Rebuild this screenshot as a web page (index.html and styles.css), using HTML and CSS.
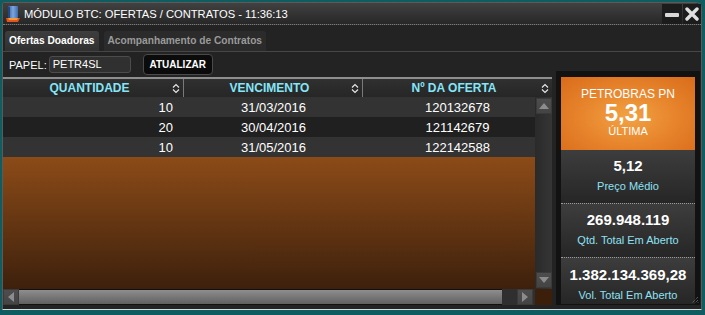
FILE: index.html
```html
<!DOCTYPE html>
<html lang="pt-br">
<head>
  <meta charset="UTF-8" />
  <title>Módulo BTC</title>
  <link rel="stylesheet" href="styles.css">
</head>
<body>
  <div class="win">

    <!-- BARRA DE TITULO -->
    <div class="titlebar">
      <svg class="app-icon" width="16" height="18" viewBox="0 0 16 18">
        <defs>
          <linearGradient id="bk" x1="0" y1="0" x2="1" y2="0">
            <stop offset="0" stop-color="#2f5d9e"/>
            <stop offset="0.5" stop-color="#7fa6dc"/>
            <stop offset="1" stop-color="#3d6bb0"/>
          </linearGradient>
        </defs>
        <rect x="3" y="1" width="10" height="12" rx="1" fill="url(#bk)"/>
        <rect x="3" y="2" width="2" height="11" fill="#24487e"/>
        <path d="M1 13 L15 13 L13 17 L2 17 Z" fill="#e0561c"/>
        <path d="M3 13 L13 13 L12 15 L4 15 Z" fill="#f49a3a"/>
      </svg>
      <span class="title">MÓDULO BTC: OFERTAS / CONTRATOS - 11:36:13</span>
      <div class="win-btns">
        <span class="wbtn min">
          <svg width="14" height="5" viewBox="0 0 14 5"><rect x="0" y="0" width="14" height="4" rx="1" fill="#d8d8d8"/></svg>
        </span>
        <span class="wbtn close">
          <svg width="14" height="14" viewBox="0 0 14 14"><path d="M2 2 L12 12 M12 2 L2 12" stroke="#e0e0e0" stroke-width="3.4" stroke-linecap="round"/></svg>
        </span>
      </div>
    </div>

    <!-- ABAS -->
    <div class="tabs">
      <span class="tab active">Ofertas Doadoras</span>
      <span class="tab">Acompanhamento de Contratos</span>
    </div>

    <div class="content">
      <div class="left">
        <div class="toolbar">
          <span class="lbl">PAPEL:</span>
          <span class="input">PETR4SL</span>
          <button class="btn">ATUALIZAR</button>
        </div>

        <!-- GRADE -->
        <div class="grid">
          <div class="grid-head">
            <div class="th c1"><span>QUANTIDADE</span>
              <svg class="sort" width="8" height="11" viewBox="0 0 8 11"><path d="M1 4.5 L4 1.5 L7 4.5 M1 6.5 L4 9.5 L7 6.5" fill="none" stroke="#e6e6e6" stroke-width="1.2"/></svg>
            </div>
            <div class="th c2"><span>VENCIMENTO</span>
              <svg class="sort" width="8" height="11" viewBox="0 0 8 11"><path d="M1 4.5 L4 1.5 L7 4.5 M1 6.5 L4 9.5 L7 6.5" fill="none" stroke="#e6e6e6" stroke-width="1.2"/></svg>
            </div>
            <div class="th c3"><span>Nº DA OFERTA</span>
              <svg class="sort" width="8" height="11" viewBox="0 0 8 11"><path d="M1 4.5 L4 1.5 L7 4.5 M1 6.5 L4 9.5 L7 6.5" fill="none" stroke="#e6e6e6" stroke-width="1.2"/></svg>
            </div>
          </div>

          <div class="grid-body">
            <div class="rows">
              <div class="row"><span class="c1">10</span><span class="c2">31/03/2016</span><span class="c3">120132678</span></div>
              <div class="row alt"><span class="c1">20</span><span class="c2">30/04/2016</span><span class="c3">121142679</span></div>
              <div class="row"><span class="c1">10</span><span class="c2">31/05/2016</span><span class="c3">122142588</span></div>
              <div class="fill"></div>
            </div>
            <div class="vscroll">
              <span class="sbtn"><svg width="10" height="6" viewBox="0 0 10 6"><path d="M0 6 L5 0 L10 6 Z" fill="#8c8c8c"/></svg></span>
              <span class="vtrack"></span>
              <span class="sbtn"><svg width="10" height="6" viewBox="0 0 10 6"><path d="M0 0 L5 6 L10 0 Z" fill="#8c8c8c"/></svg></span>
            </div>
          </div>

          <div class="hscroll">
            <span class="sbtn"><svg width="6" height="10" viewBox="0 0 6 10"><path d="M6 0 L0 5 L6 10 Z" fill="#8c8c8c"/></svg></span>
            <span class="hthumb"></span>
            <span class="htrack"></span>
            <span class="sbtn"><svg width="6" height="10" viewBox="0 0 6 10"><path d="M0 0 L6 5 L0 10 Z" fill="#8c8c8c"/></svg></span>
            <span class="corner"></span>
          </div>
        </div>
      </div>

      <!-- PAINEL LATERAL -->
      <div class="side">
        <div class="quote">
          <div class="q-name">PETROBRAS PN</div>
          <div class="q-price">5,31</div>
          <div class="q-lbl">ÚLTIMA</div>
        </div>
        <div class="stat">
          <div class="s-val">5,12</div>
          <div class="s-lbl">Preço Médio</div>
        </div>
        <div class="stat">
          <div class="s-val">269.948.119</div>
          <div class="s-lbl">Qtd. Total Em Aberto</div>
        </div>
        <div class="stat last">
          <div class="s-val">1.382.134.369,28</div>
          <div class="s-lbl">Vol. Total Em Aberto</div>
        </div>
        <svg class="grip" width="8" height="8" viewBox="0 0 8 8"><path d="M7 1 L1 7 M7 4 L4 7 M7 6.5 L6.5 7" stroke="#777" stroke-width="1" stroke-dasharray="1 1"/></svg>
      </div>
    </div>
  </div>
</body>
</html>
```

FILE: styles.css
```css
* { margin: 0; padding: 0; box-sizing: border-box; }
html, body { width: 705px; height: 315px; overflow: hidden; }
body { background: #0f5d61; font-family: 'Liberation Sans', Arial, sans-serif; color: #fff; }

/* Janela */
.win { margin: 2px 3px 0 2px; height: 308px; background: #232323; border: 1px solid #5a5a5a; border-bottom-color: #d8d8d8; border-radius: 3px 6px 0 0; display: flex; flex-direction: column; }

/* Barra de titulo */
.titlebar { height: 22px; display: flex; align-items: center; background: linear-gradient(#414141, #272727); border-bottom: 1px dotted #7a7a7a; border-radius: 3px 6px 0 0; }
.app-icon { margin: 0 3px 0 2px; }
.title { font-size: 11.2px; color: #fff; flex: 1; white-space: nowrap; }
.win-btns { display: flex; align-self: stretch; padding-top: 1px; }
.wbtn { display: flex; align-items: center; justify-content: center; background: #1c1c1c; height: 20px; }
.wbtn.min { width: 20px; margin-right: 1px; padding-top: 3px; }
.wbtn.close { width: 18px; margin-right: 0; }

/* Abas */
.tabs { height: 27px; padding: 6px 0 0 2px; display: flex; gap: 5px; border-bottom: 1px solid #464646; }
.tab { height: 20px; line-height: 20px; padding: 0 4px; font-size: 10.2px; font-weight: bold; color: #9a9a9a; background: #2b2b2b; border-radius: 3px 3px 0 0; white-space: nowrap; }
.tab.active { color: #fff; background: linear-gradient(#3e3e3e, #303030); }

/* Conteudo */
.content { flex: 1; display: flex; }
.left { width: 550px; display: flex; flex-direction: column; }
.toolbar { height: 25px; display: flex; align-items: center; padding-left: 6px; }
.lbl { font-size: 11px; margin-right: 2px; }
.input { width: 82px; height: 17px; line-height: 15px; padding-left: 3px; font-size: 11px; background: #303030; border: 1px solid #4c4c4c; border-radius: 3px; margin-right: 12px; }
.btn { width: 70px; height: 21px; font-family: inherit; font-size: 10px; font-weight: bold; color: #fff; background: #0b0b0b; border: 1px solid #4a4a4a; border-radius: 4px; }

/* Grade */
.grid { width: 549px; display: flex; flex-direction: column; }
.grid-head { height: 20px; display: flex; border-top: 2px solid #8e8e8e; background: linear-gradient(#303030, #262626); }
.th { display: flex; align-items: center; font-size: 12px; font-weight: bold; color: #84e6f8; border-right: 1px solid #7a7a7a; }
.th span { flex: 1; text-align: center; padding-left: 4px; }
.th .sort { margin-right: 3px; }
.th.c1 { width: 181px; }
.th.c2 { width: 179px; }
.th.c3 { width: 189px; border-right: none; }

.grid-body { height: 192px; display: flex; }
.rows { width: 532px; display: flex; flex-direction: column; overflow: hidden; }
.row { height: 20px; display: flex; align-items: center; font-size: 13px; background: #333; }
.row.alt { background: #202020; }
.row span { flex: none; }
.row .c1 { width: 181px; text-align: right; padding-right: 11px; }
.row .c2 { width: 179px; text-align: center; }
.row .c3 { width: 189px; text-align: center; }
.fill { flex: 1; background: linear-gradient(#8c4b18, #3d200c); }

/* Barras de rolagem */
.vscroll { width: 17px; display: flex; flex-direction: column; background: linear-gradient(90deg, #2a2a2a, #353535); padding: 1px 0 1px 1px; }
.vtrack { flex: 1; }
.sbtn { width: 16px; height: 16px; display: flex; align-items: center; justify-content: center; background: linear-gradient(#4d4d4d, #444); border: 1px solid #3a3a3a; }
.hscroll { height: 16px; display: flex; background: #2f2f2f; }
.hthumb { width: 483px; background: linear-gradient(#8e8e8e, #606060); border-top: 1px solid #111; border-bottom: 1px solid #111; }
.htrack { width: 15px; }
.corner { width: 17px; margin-left: 2px; background: #3b1f0b; }

/* Painel lateral */
.side { position: relative; width: 144px; height: 234px; margin: 19px 0 0 3px; padding: 6px 5px 0; background: #121212; }
.quote { height: 73px; text-align: center; padding-top: 10px; background: radial-gradient(ellipse at 50% 55%, #f2a244 0%, #e7842c 50%, #d96b1a 100%); }
.q-name { font-size: 12px; line-height: 14px; }
.q-price { font-size: 24px; font-weight: bold; line-height: 24px; }
.q-lbl { font-size: 11px; line-height: 13px; }
.stat { height: 54px; text-align: center; padding-top: 7px; background: linear-gradient(#3d3d3d, #262626); border-bottom: 1px dotted #9a9a9a; }
.stat.last { height: 46px; border-bottom: none; padding-top: 8px; }
.s-val { font-size: 15px; font-weight: bold; line-height: 18px; }
.s-lbl { font-size: 11px; line-height: 14px; margin-top: 4px; color: #8ee2f4; }
.grip { position: absolute; right: 1px; bottom: 1px; }
```
